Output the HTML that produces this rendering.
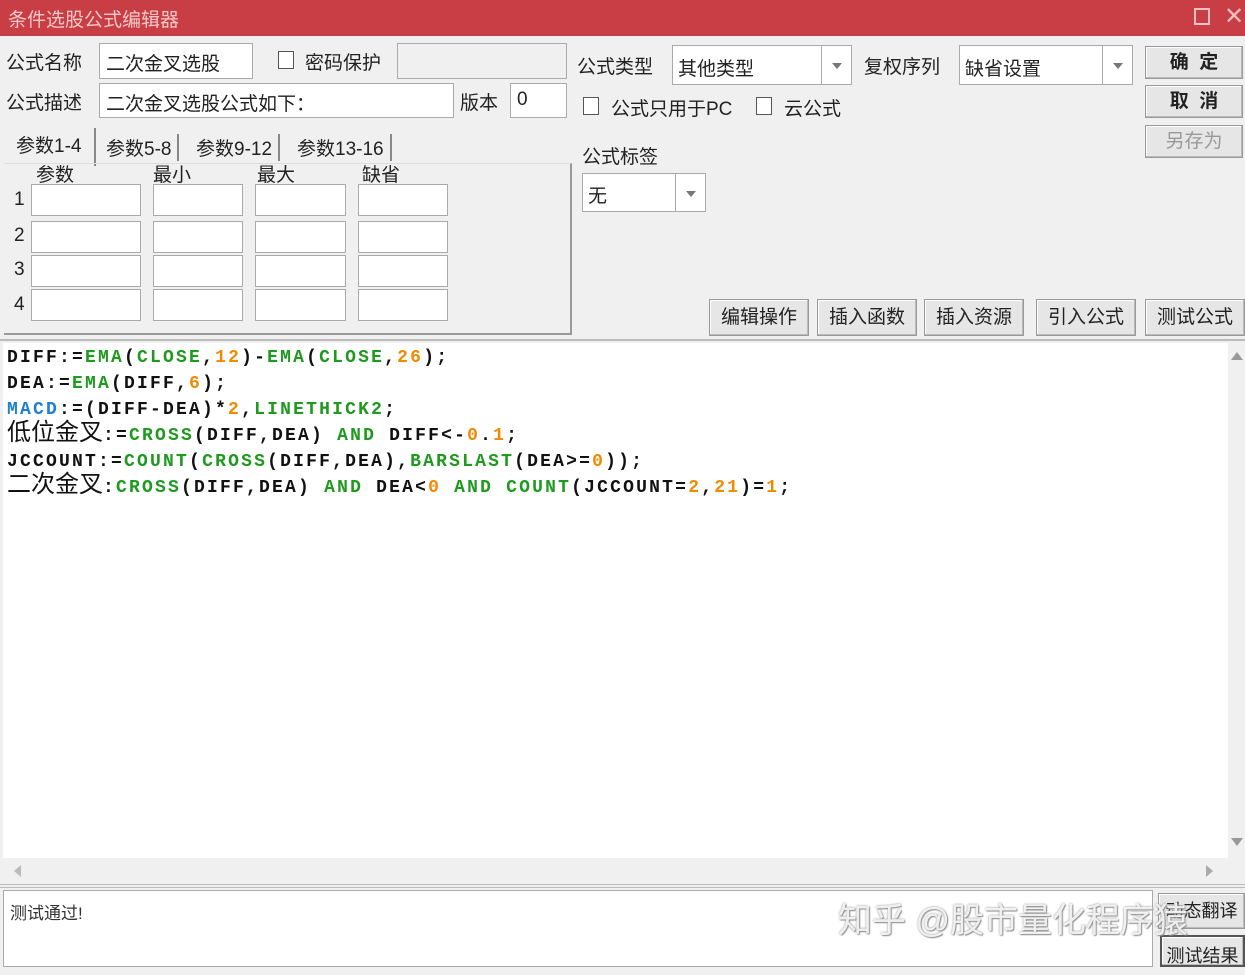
<!DOCTYPE html>
<html><head><meta charset="utf-8">
<style>
*{box-sizing:border-box;margin:0;padding:0}
body{width:1245px;height:967px;overflow:hidden;background:#f0f0f0;font-family:"Liberation Sans","Noto Sans CJK SC",sans-serif;font-size:19px;color:#222;position:relative}
.a{position:absolute;white-space:nowrap}
.inp{position:absolute;background:#fff;border:1px solid #aaa;}
.btn{position:absolute;background:#e6e6e6;border:1px solid #999;box-shadow:inset -1px -1px 0 #bbb, inset 1px 1px 0 #fff;text-align:center;font-size:19px}
.cb{position:absolute;width:16px;height:18px;border:1px solid #555;background:#fff}
.dd{position:absolute;right:0;top:0;bottom:0;width:30px;border-left:1px solid #aaa}
.dd:after{content:"";position:absolute;left:10px;top:50%;margin-top:-2px;border:5px solid transparent;border-top:6px solid #777}
#code{position:absolute;left:3px;top:343px;width:1225px;height:515px;background:#fff;font-family:"Liberation Mono",monospace;font-weight:bold;font-size:18px;letter-spacing:2.2px;line-height:26px;padding:2px 0 0 4px;color:#111}
#code div{height:26px;white-space:pre;overflow:visible}
.g{color:#1e9a1e}.o{color:#f08a00}.b{color:#1f7fd0}
.cj{font-family:"Liberation Sans","Noto Sans CJK SC",sans-serif;font-weight:normal;font-size:24px;letter-spacing:0;line-height:18px}
</style></head><body>
<div class="a" style="left:0;top:0;width:1245px;height:36px;background:#c93d44;"></div>
<div class="a" style="left:8px;top:5px;color:#f3c8c8;font-size:19px">条件选股公式编辑器</div>
<div class="a" style="left:1194px;top:8px;width:16px;height:17px;border:2px solid #f0c0c0"></div>
<div class="a" style="left:1224px;top:2px;color:#f0c0c0;font-size:24px">✕</div>

<div class="a" style="left:6px;top:48px">公式名称</div>
<div class="inp" style="left:99px;top:43px;width:154px;height:36px"><span class="a" style="left:6px;top:5px">二次金叉选股</span></div>
<div class="cb" style="left:278px;top:51px"></div>
<div class="a" style="left:305px;top:48px">密码保护</div>
<div class="inp" style="left:397px;top:43px;width:170px;height:36px;background:#f0f0f0"></div>

<div class="a" style="left:6px;top:88px">公式描述</div>
<div class="inp" style="left:99px;top:83px;width:355px;height:35px"><span class="a" style="left:6px;top:5px">二次金叉选股公式如下：</span></div>
<div class="a" style="left:460px;top:88px">版本</div>
<div class="inp" style="left:510px;top:83px;width:57px;height:35px"><span class="a" style="left:6px;top:5px">0</span></div>

<div class="a" style="left:8px;top:128px;width:88px;height:38px;border-right:2px solid #888"></div>
<div class="a" style="left:16px;top:131px">参数1-4</div>
<div class="a" style="left:106px;top:134px;border-right:2px solid #888;padding-right:6px">参数5-8</div>
<div class="a" style="left:196px;top:134px;border-right:2px solid #888;padding-right:6px">参数9-12</div>
<div class="a" style="left:297px;top:134px;border-right:2px solid #888;padding-right:6px">参数13-16</div>
<div class="a" style="left:4px;top:163px;width:568px;height:172px;border-right:2px solid #999;border-bottom:2px solid #999;border-top:1px solid #ddd"></div>
<div class="a" style="left:36px;top:160px">参数</div>
<div class="a" style="left:153px;top:160px">最小</div>
<div class="a" style="left:257px;top:160px">最大</div>
<div class="a" style="left:362px;top:160px">缺省</div>

<div class="a" style="left:14px;top:189px">1</div>
<div class="a" style="left:14px;top:225px">2</div>
<div class="a" style="left:14px;top:259px">3</div>
<div class="a" style="left:14px;top:294px">4</div>
<div class="inp" style="left:31px;top:184px;width:110px;height:32px"></div><div class="inp" style="left:153px;top:184px;width:90px;height:32px"></div><div class="inp" style="left:255px;top:184px;width:91px;height:32px"></div><div class="inp" style="left:358px;top:184px;width:90px;height:32px"></div>
<div class="inp" style="left:31px;top:221px;width:110px;height:32px"></div><div class="inp" style="left:153px;top:221px;width:90px;height:32px"></div><div class="inp" style="left:255px;top:221px;width:91px;height:32px"></div><div class="inp" style="left:358px;top:221px;width:90px;height:32px"></div>
<div class="inp" style="left:31px;top:255px;width:110px;height:32px"></div><div class="inp" style="left:153px;top:255px;width:90px;height:32px"></div><div class="inp" style="left:255px;top:255px;width:91px;height:32px"></div><div class="inp" style="left:358px;top:255px;width:90px;height:32px"></div>
<div class="inp" style="left:31px;top:289px;width:110px;height:32px"></div><div class="inp" style="left:153px;top:289px;width:90px;height:32px"></div><div class="inp" style="left:255px;top:289px;width:91px;height:32px"></div><div class="inp" style="left:358px;top:289px;width:90px;height:32px"></div>

<div class="a" style="left:577px;top:52px">公式类型</div>
<div class="inp" style="left:672px;top:45px;width:180px;height:40px"><span class="a" style="left:5px;top:8px">其他类型</span><div class="dd"></div></div>
<div class="a" style="left:864px;top:52px">复权序列</div>
<div class="inp" style="left:959px;top:45px;width:174px;height:40px"><span class="a" style="left:5px;top:8px">缺省设置</span><div class="dd"></div></div>
<div class="cb" style="left:583px;top:97px"></div>
<div class="a" style="left:611px;top:94px">公式只用于PC</div>
<div class="cb" style="left:756px;top:97px"></div>
<div class="a" style="left:784px;top:94px">云公式</div>
<div class="a" style="left:582px;top:142px">公式标签</div>
<div class="inp" style="left:582px;top:173px;width:124px;height:39px"><span class="a" style="left:5px;top:7px">无</span><div class="dd"></div></div>

<div class="btn" style="left:1145px;top:46px;width:98px;height:33px;line-height:31px;font-weight:bold">确&nbsp; 定</div>
<div class="btn" style="left:1145px;top:85px;width:98px;height:33px;line-height:31px;font-weight:bold">取&nbsp; 消</div>
<div class="btn" style="left:1145px;top:125px;width:98px;height:33px;line-height:31px;color:#999">另存为</div>

<div class="btn" style="left:709px;top:299px;width:100px;height:37px;line-height:35px">编辑操作</div>
<div class="btn" style="left:817px;top:299px;width:100px;height:37px;line-height:35px">插入函数</div>
<div class="btn" style="left:924px;top:299px;width:100px;height:37px;line-height:35px">插入资源</div>
<div class="btn" style="left:1036px;top:299px;width:100px;height:37px;line-height:35px">引入公式</div>
<div class="btn" style="left:1145px;top:299px;width:100px;height:37px;line-height:35px">测试公式</div>

<div class="a" style="left:0;top:339px;width:1245px;height:2px;background:#bbb"></div>
<div id="code">
<div>DIFF:=<span class="g">EMA</span>(<span class="g">CLOSE</span>,<span class="o">12</span>)-<span class="g">EMA</span>(<span class="g">CLOSE</span>,<span class="o">26</span>);</div>
<div>DEA:=<span class="g">EMA</span>(DIFF,<span class="o">6</span>);</div>
<div><span class="b">MACD</span>:=(DIFF-DEA)*<span class="o">2</span>,<span class="g">LINETHICK2</span>;</div>
<div><span class="cj">低位金叉</span>:=<span class="g">CROSS</span>(DIFF,DEA) <span class="g">AND</span> DIFF&lt;-<span class="o">0</span>.<span class="o">1</span>;</div>
<div>JCCOUNT:=<span class="g">COUNT</span>(<span class="g">CROSS</span>(DIFF,DEA),<span class="g">BARSLAST</span>(DEA&gt;=<span class="o">0</span>));</div>
<div><span class="cj">二次金叉</span>:<span class="g">CROSS</span>(DIFF,DEA) <span class="g">AND</span> DEA&lt;<span class="o">0</span> <span class="g">AND</span> <span class="g">COUNT</span>(JCCOUNT=<span class="o">2</span>,<span class="o">21</span>)=<span class="o">1</span>;</div>
</div>
<div class="a" style="left:1228px;top:343px;width:17px;height:515px;background:#f0f0f0"></div>
<div class="a" style="left:1231px;top:352px;border:6px solid transparent;border-bottom:8px solid #999;border-top:0"></div>
<div class="a" style="left:1231px;top:838px;border:6px solid transparent;border-top:8px solid #999;border-bottom:0"></div>
<div class="a" style="left:14px;top:865px;border:6px solid transparent;border-right:7px solid #bbb;border-left:0"></div>
<div class="a" style="left:1206px;top:865px;border:6px solid transparent;border-left:7px solid #aaa;border-right:0"></div>
<div class="a" style="left:0;top:884px;width:1245px;height:4px;border-top:1px solid #bbb;border-bottom:1px solid #bbb"></div>
<div class="a" style="left:3px;top:890px;width:1150px;height:77px;background:#fff;border:1px solid #aaa"></div>
<div class="a" style="left:10px;top:899px;font-size:17px;color:#333">测试通过!</div>
<div class="btn" style="left:1158px;top:893px;width:87px;height:36px;line-height:34px;font-size:18px">动态翻译</div>
<div class="btn" style="left:1160px;top:935px;width:85px;height:32px;line-height:38px;font-size:18px;border:2px solid #555">测试结果</div>
<div class="a" style="left:838px;top:893px;font-size:34px;color:rgba(255,255,255,0.85);text-shadow:0 0 2px #888,1px 1px 1px #999">知乎 @股市量化程序猿</div>
</body></html>
